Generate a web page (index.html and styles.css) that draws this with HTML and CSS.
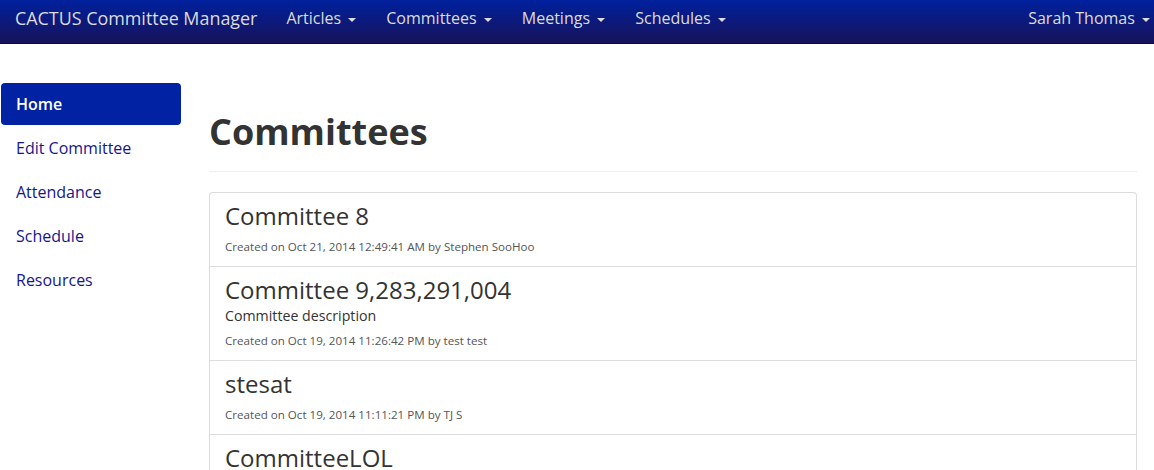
FILE: index.html
```html
<!DOCTYPE html>
<html>
<head>
<meta charset="utf-8">
<link rel="stylesheet" href="styles.css">
</head>
<body>
<header class="navbar">
  <a class="brand">CACTUS Committee Manager</a>
  <ul class="nav">
    <li><a>Articles <span class="caret"></span></a></li>
    <li><a>Committees <span class="caret"></span></a></li>
    <li><a>Meetings <span class="caret"></span></a></li>
    <li><a>Schedules <span class="caret"></span></a></li>
  </ul>
  <ul class="nav nav-right">
    <li><a>Sarah Thomas <span class="caret"></span></a></li>
  </ul>
</header>
<div class="layout">
  <aside class="sidebar">
    <ul class="pills">
      <li class="active"><a>Home</a></li>
      <li><a>Edit Committee</a></li>
      <li><a>Attendance</a></li>
      <li><a>Schedule</a></li>
      <li><a>Resources</a></li>
    </ul>
  </aside>
  <main class="main">
    <div class="page-header"><h1>Committees</h1></div>
    <div class="list">
      <div class="item">
        <h3>Committee 8</h3>
        <p class="meta">Created on Oct 21, 2014 12:49:41 AM by Stephen SooHoo</p>
      </div>
      <div class="item">
        <h3>Committee 9,283,291,004</h3>
        <p class="desc">Committee description</p>
        <p class="meta">Created on Oct 19, 2014 11:26:42 PM by test test</p>
      </div>
      <div class="item">
        <h3>stesat</h3>
        <p class="meta">Created on Oct 19, 2014 11:11:21 PM by TJ S</p>
      </div>
      <div class="item">
        <h3>CommitteeLOL</h3>
        <p class="meta">Created on Oct 19, 2014 10:58:03 PM by TJ S</p>
      </div>
    </div>
  </main>
</div>
</body>
</html>
```
FILE: styles.css
```css
* { box-sizing: border-box; }
html, body { margin: 0; padding: 0; overflow: hidden; }
body {
  font-family: "Open Sans", "Liberation Sans", sans-serif;
  font-size: 14px;
  line-height: 1.42857;
  color: #333;
  background: #fff;
}
ul { list-style: none; margin: 0; padding: 0; }
a { text-decoration: none; cursor: pointer; }

.navbar {
  display: flex;
  align-items: stretch;
  height: 44px;
  background: linear-gradient(#00209d, #17135a);
  border-bottom: 1px solid #0a0a20;
  color: #dcdcdc;
}
.brand {
  padding: 0 14px 0 15px;
  font-size: 17.9px;
  line-height: 37px;
  color: #dcdcdc;
}
.nav { display: flex; }
.nav li a {
  display: block;
  padding: 0 15px;
  font-size: 16px;
  line-height: 37px;
  color: #dcdcdc;
}
.nav-right { margin-left: auto; }
.nav-right li a { padding-right: 4px; }
.caret {
  display: inline-block;
  width: 0;
  height: 0;
  margin-left: 3px;
  vertical-align: middle;
  border-top: 4px solid;
  border-left: 4px solid transparent;
  border-right: 4px solid transparent;
}

.layout { display: flex; }
.sidebar {
  width: 181px;
  flex: none;
  padding: 39px 0 0 1px;
}
.pills { display: flex; flex-direction: column; gap: 2px; }
.pills li a {
  display: block;
  padding: 10px 15px;
  font-size: 16px;
  line-height: 22px;
  color: #16168c;
  border-radius: 4px;
}
.pills li.active a {
  background: #0022a3;
  color: #fff;
  font-weight: 600;
}

.main {
  flex: 1;
  margin-left: 28px;
  margin-right: 17px;
}
.page-header {
  margin-top: 68px;
  padding-bottom: 9px;
  border-bottom: 1px solid #eee;
  margin-bottom: 20px;
}
.page-header h1 {
  margin: 0 0 10px;
  font-size: 36px;
  line-height: 1.1;
  font-weight: 700;
  color: #333;
}
.list {
  border: 1px solid #ddd;
  border-bottom: none;
  border-radius: 4px 4px 0 0;
}
.item {
  padding: 10px 15px;
  border-bottom: 1px solid #ddd;
}
.item h3 {
  margin: 0;
  font-size: 24px;
  line-height: 26px;
  font-weight: 400;
  color: #333;
}
.desc {
  margin: 3px 0 0;
  font-size: 14.2px;
  line-height: 20px;
  color: #333;
}
.meta {
  margin: 8px 0 0;
  font-size: 11.6px;
  line-height: 19px;
  color: #555;
}
.desc + .meta { margin-top: 5px; }
```
